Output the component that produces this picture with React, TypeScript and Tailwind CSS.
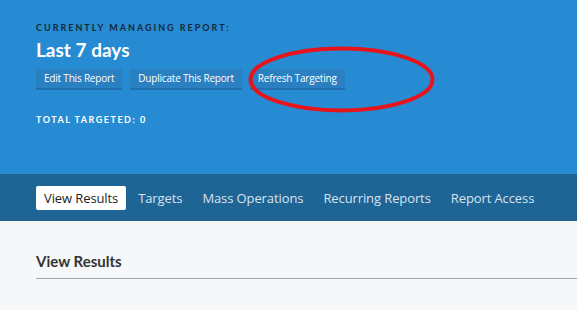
export default function App() {
  const tabs = ["View Results", "Targets", "Mass Operations", "Recurring Reports", "Report Access"];
  return (
    <div className="relative w-[577px] h-[310px] overflow-hidden bg-[#f6f7f9]">
      <div className="h-[174px] bg-[#268bd2] pl-9 pt-[22px]">
        <div className="text-[9px] font-bold tracking-[2px] text-[#17283a] leading-[12px]" style={{ fontFamily: "Lato, sans-serif" }}>
          CURRENTLY MANAGING REPORT:
        </div>
        <div className="mt-[4px] text-[19px] font-bold text-white leading-[24px]" style={{ fontFamily: "Lato, sans-serif" }}>
          Last 7 days
        </div>
        <div className="mt-[7px] flex gap-2">
          {["Edit This Report", "Duplicate This Report", "Refresh Targeting"].map((b) => (
            <div
              key={b}
              className="h-[21px] px-2 whitespace-nowrap bg-[#2b80c1] border-b-2 border-[#1f70ad] text-[10px] tracking-[-0.2px] text-white leading-[19px]"
              style={{ fontFamily: "'Open Sans', sans-serif" }}
            >
              {b}
            </div>
          ))}
        </div>
        <div className="mt-[24px] text-[9px] font-bold tracking-[1.5px] text-white leading-[12px]" style={{ fontFamily: "Lato, sans-serif" }}>
          TOTAL TARGETED: 0
        </div>
      </div>
      <div className="h-[47px] bg-[#1e6596] flex items-center pl-9 gap-[4px]" style={{ fontFamily: "'Open Sans', sans-serif" }}>
        {tabs.map((t, i) => (
          <div
            key={t}
            className={
              i === 0
                ? "shrink-0 whitespace-nowrap px-2 h-[24px] leading-[24px] bg-white text-[#222] text-[13px] tracking-[-0.1px] rounded-[2px]"
                : "shrink-0 whitespace-nowrap px-2 h-[24px] leading-[24px] text-[#d6e3ee] text-[13px] tracking-[-0.1px]"
            }
          >
            {t}
          </div>
        ))}
      </div>
      <div className="pl-9 pt-[29px]">
        <div className="text-[15px] font-bold text-[#333] pb-[5px] border-b border-[#a4a6a9]" style={{ fontFamily: "Lato, sans-serif" }}>
          View Results
        </div>
      </div>
      <svg className="absolute left-0 top-0" width="577" height="310">
        <ellipse cx="341.5" cy="79.5" rx="91" ry="31" fill="none" stroke="#e8141c" strokeWidth="4" />
      </svg>
    </div>
  );
}
